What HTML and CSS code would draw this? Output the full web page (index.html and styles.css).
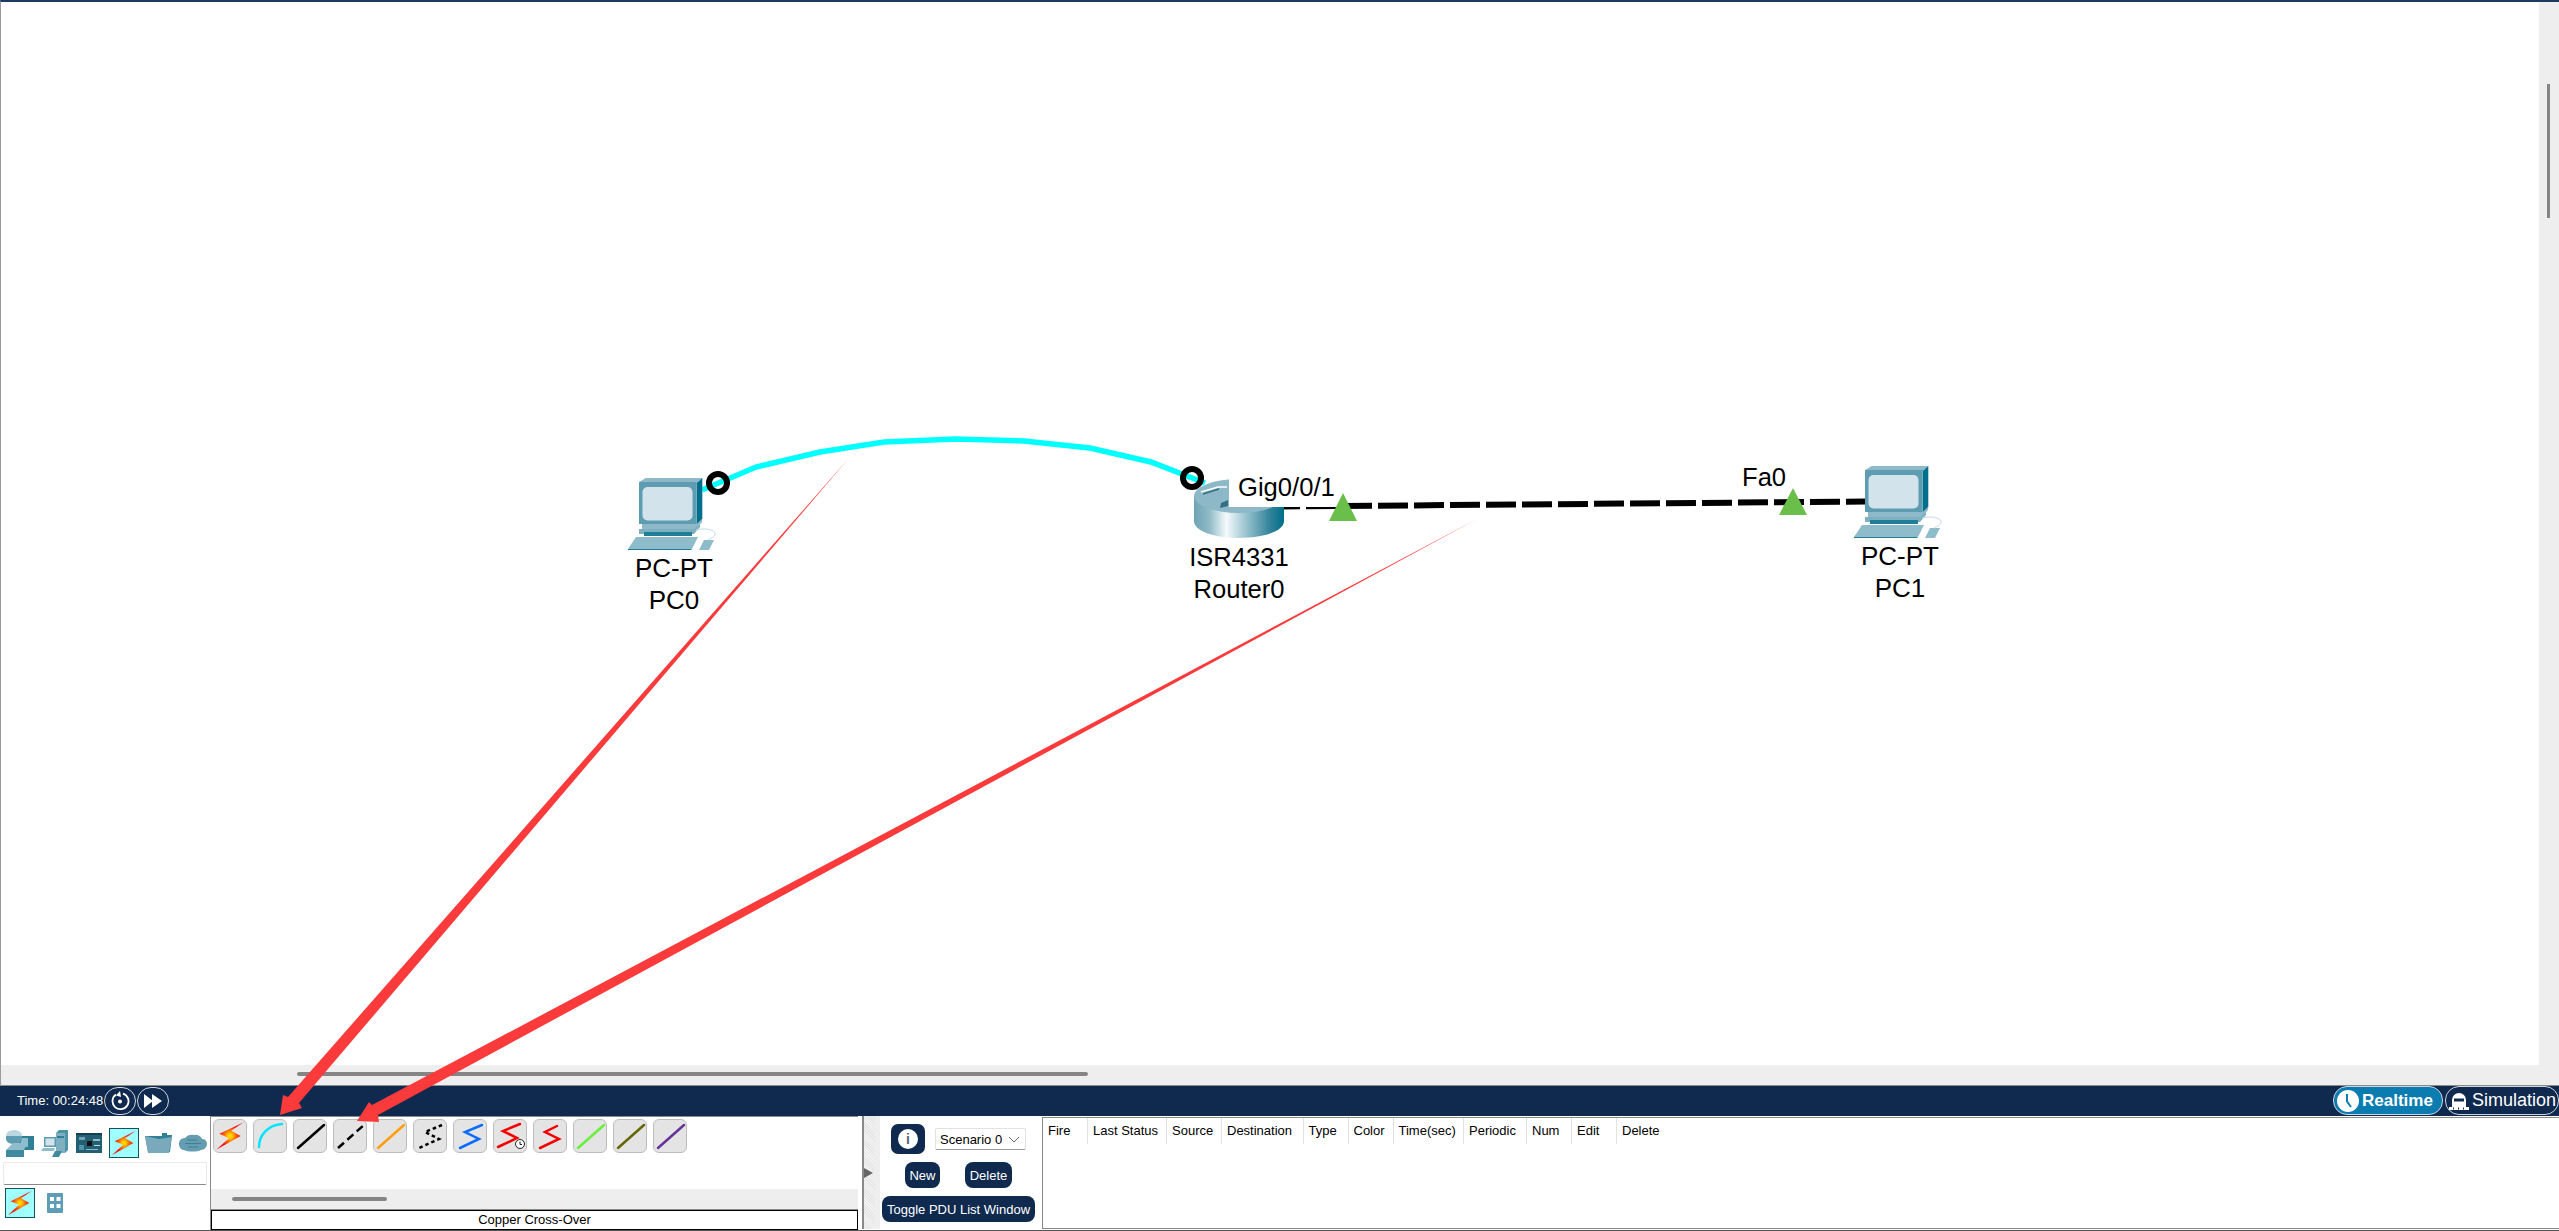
FILE: index.html
```html
<!DOCTYPE html>
<html lang="en">
<head>
<meta charset="utf-8">
<title>Packet Tracer</title>
<link rel="stylesheet" href="styles.css">
</head>
<body>
<svg class="defs" width="0" height="0" aria-hidden="true">
  <defs>
    <radialGradient id="bolt" cx="50%" cy="50%" r="50%">
      <stop offset="0" stop-color="#ffe600"/>
      <stop offset=".18" stop-color="#ffc400"/>
      <stop offset=".42" stop-color="#ff6a00"/>
      <stop offset=".75" stop-color="#f01010"/>
    </radialGradient>
    <linearGradient id="drum" x1="0" x2="1" y1="0" y2="0">
      <stop offset="0" stop-color="#6fa3b4"/>
      <stop offset=".17" stop-color="#8fbac7"/>
      <stop offset=".36" stop-color="#f4fafb"/>
      <stop offset=".55" stop-color="#a5cad5"/>
      <stop offset=".85" stop-color="#2f8198"/>
      <stop offset="1" stop-color="#006f8c"/>
    </linearGradient>
    <symbol id="pc" viewBox="0 0 88 72">
      <polygon points="11,4 17.7,0 74.3,0 68.7,5" fill="#8fb9c8"/>
      <polygon points="68.7,5 74.3,0 74.3,41 68.7,47" fill="#006f8c"/>
      <rect x="11" y="4" width="57.7" height="42" fill="#5e9db1"/>
      <rect x="14.5" y="9" width="50" height="33.5" rx="5" fill="#d3e3eb"/>
      <polygon points="14,46 68.7,46 74,41 74,44 68,51 14,51" fill="#8fb9c8"/>
      <polygon points="11,51 66,51 72,46 72,49 66,56 11,56" fill="#7fb0c0"/>
      <rect x="16" y="54" width="48" height="4" fill="#1f7f99"/>
      <polygon points="0,71 8,59 70,59 64,71" fill="#8fbccb"/>
      <polygon points="0,71 64,71 63,72 0,72" fill="#1f7f99"/>
      <polygon points="71,72 76,62 86,62 81,72" fill="#8fbccb"/>
      <path d="M68 52c8-2 17-1 19 3 1 3-3 5-7 7" fill="none" stroke="#c4dbe3" stroke-width="1"/>
    </symbol>
    <symbol id="lightning" viewBox="0 0 30 30">
      <polygon points="28,2 5,13 14,17 2,28 25,15 16,10" fill="url(#bolt)"/>
    </symbol>
  </defs>
</svg>

<main class="workspace">
  <section class="canvas">
    <svg class="wires" width="2538" height="1063">
      <g transform="translate(-1 -2)">
        <polyline class="wire-cross" points="702,490 756,467 820,452 884,442 955,439 1024,441 1090,448 1151,462 1205,483"/>
        <line class="wire-straight" x1="1283" y1="506.5" x2="1866" y2="501.5"/>
      </g>
    </svg>

    <div class="node node-pc0">
      <svg class="pc-icon" width="88" height="72"><use href="#pc"/></svg>
      <span class="node-text">PC-PT</span>
      <span class="node-text">PC0</span>
    </div>
    <div class="node node-router">
      <svg class="router-icon" width="90" height="60" viewBox="0 0 90 60">
        <path d="M0 17V42C0 52 20 59 45 59S90 52 90 42V17Z" fill="url(#drum)"/>
        <ellipse cx="45" cy="17" rx="45" ry="17" fill="#8db8c8"/>
        <path d="M7 13L24 8H33" fill="none" stroke="#fff" stroke-width="1.500"/>
        <path d="M9 15L25 10" fill="none" stroke="#346f83" stroke-width="1.500"/>
        <polygon points="27,24 34,21 34,27 26,29" fill="#346f83"/>
      </svg>
      <span class="node-text">ISR4331</span>
      <span class="node-text">Router0</span>
    </div>
    <div class="node node-pc1">
      <svg class="pc-icon" width="88" height="72"><use href="#pc"/></svg>
      <span class="node-text">PC-PT</span>
      <span class="node-text">PC1</span>
    </div>

    <span class="port port-gig">Gig0/0/1</span>
    <span class="port port-fa">Fa0</span>

    <svg class="wires" width="2538" height="1063">
      <g transform="translate(-1 -2)">
        <circle class="ring" cx="718" cy="483" r="9"/>
        <circle class="ring" cx="1192" cy="478" r="9"/>
        <polygon class="link-up" points="1329,521 1357,521 1343,493"/>
        <polygon class="link-up" points="1779,515 1807,515 1793,488"/>
      </g>
    </svg>
  </section>
  <div class="vtrack"><div class="vthumb"></div></div>
  <div class="htrack"><div class="hthumb"></div></div>
  <div class="corner"></div>
</main>

<header class="timebar">
  <span class="time">Time: 00:24:48</span>
  <button class="round-btn" type="button" aria-label="Reset">
    <svg width="20" height="20" viewBox="0 0 20 20"><path d="M6 3.600A8 8 0 1 0 13 2.600" fill="none" stroke="#fff" stroke-width="1.800"/><polygon points="10,0 6,4.500 11,6" fill="#fff"/><circle cx="10" cy="10.500" r="2" fill="#fff"/></svg>
  </button>
  <button class="round-btn" type="button" aria-label="Fast forward">
    <svg width="18" height="14" viewBox="0 0 18 14"><polygon points="0,0 9,7 0,14" fill="#fff"/><polygon points="8,0 18,7 8,14" fill="#fff"/></svg>
  </button>
  <span class="grow"></span>
  <button class="mode mode-real" type="button">
    <svg width="22" height="22" viewBox="0 0 22 22"><circle cx="11" cy="11" r="11" fill="#fff"/><path d="M10 4V11.500L14 17" fill="none" stroke="#0a7cb0" stroke-width="2"/></svg>
    Realtime
  </button>
  <button class="mode mode-sim" type="button">
    <svg width="20" height="18" viewBox="0 0 20 18"><path d="M3 15V8A7 7 0 0 1 17 8V15Z" fill="#fff"/><rect x="5" y="6.500" width="10" height="3" fill="#0f2a4e"/><rect x="0" y="15" width="20" height="3" fill="#fff"/><rect x="4" y="15.500" width="1" height="2" fill="#0f2a4e"/><rect x="9" y="15.500" width="1" height="2" fill="#0f2a4e"/><rect x="14" y="15.500" width="1" height="2" fill="#0f2a4e"/></svg>
    Simulation
  </button>
</header>

<footer class="dock">
  <section class="categories">
    <div class="cat-row">
      <svg width="28" height="27" viewBox="0 0 28 27">
        <rect x="13" y="6" width="15" height="14" fill="#2f7f97"/><rect x="15" y="8" width="7" height="9" fill="#8dbccb"/>
        <ellipse cx="8" cy="5.500" rx="8" ry="5.500" fill="#bcd7e0"/><path d="M0 6v3c0 3 4 5 8 5s8-2 8-5V6" fill="#5e9db1"/>
        <polygon points="0,20 7,13 21,13 18,20" fill="#8fbccb"/><rect x="0" y="20" width="18" height="7" fill="#3f8aa1"/>
      </svg>
      <svg width="28" height="27" viewBox="0 0 28 27">
        <polygon points="15,3 18,0 27,0 27,20 24,23 15,23" fill="#4d93a9"/><rect x="15" y="3" width="9" height="20" fill="#7fb0c0"/><rect x="16" y="6" width="7" height="2" fill="#2f7f97"/>
        <rect x="3" y="7" width="12" height="10" fill="#5e9db1"/><rect x="4.500" y="8.500" width="9" height="7" fill="#d3e3eb"/>
        <polygon points="0,21 2,18 14,18 13,21" fill="#8fbccb"/>
        <polygon points="11,27 14,21 21,21 18,27" fill="#3f8aa1"/>
      </svg>
      <svg width="26" height="20" viewBox="0 0 26 20">
        <rect width="26" height="20" fill="#245e73"/><rect x="0" y="0" width="26" height="2" fill="#14414f"/><rect x="11" y="8" width="5" height="5" fill="#111"/><rect x="3" y="4" width="6" height="3" fill="#6fa3b4"/><rect x="17" y="6" width="7" height="2" fill="#8fbccb"/><rect x="3" y="12" width="5" height="5" fill="#4d93a9"/><rect x="18" y="12" width="6" height="1" fill="#c4dbe3"/><rect x="10" y="16" width="12" height="1" fill="#8fbccb"/>
      </svg>
      <span class="tile"><svg width="30" height="30"><use href="#lightning"/></svg></span>
      <svg width="27" height="20" viewBox="0 0 27 20">
        <polygon points="0,3 17,3 17,0 22,0 22,2 27,2 25,19 3,19" fill="#2f7f97"/><polygon points="0,3 14,6 27,4 24,20 3,20" fill="#79a9ba"/>
      </svg>
      <svg width="28" height="18" viewBox="0 0 28 18">
        <path d="M5 16C1 16 0 12 0 9.500S2 4 6 4C8 1 12 0 15 1C18 0 22 2 23 5C26 5 28 7 28 10S25 16 22 16C18 18 9 18 5 16Z" fill="#659db0"/>
        <path d="M8 6H18M6 9.500H22M9 13H19" stroke="#3f7f95" stroke-width="1.200"/>
      </svg>
    </div>
    <div class="search-box"></div>
    <div class="sub-row">
      <span class="tile"><svg width="30" height="30"><use href="#lightning"/></svg></span>
      <svg width="16" height="20" viewBox="0 0 16 20"><rect width="16" height="20" rx="1" fill="#5d9db5"/><rect x="3" y="4" width="4" height="4" fill="#fff"/><rect x="9.500" y="4" width="4" height="4" fill="#fff"/><rect x="3" y="11" width="4" height="4" fill="#fff"/><rect x="9.500" y="11" width="4" height="4" fill="#fff"/></svg>
    </div>
  </section>

  <section class="parts">
    <div class="cable-row">
      <button class="cable" type="button" aria-label="Automatic"><svg width="32" height="32"><use href="#lightning"/></svg></button>
      <button class="cable" type="button" aria-label="Console"><svg width="32" height="32" viewBox="0 0 32 32"><path class="c-cyan" d="M5 27C5 15 14 5 28 4"/></svg></button>
      <button class="cable" type="button" aria-label="Copper Straight-Through"><svg width="32" height="32" viewBox="0 0 32 32"><path class="c-black" d="M4 28L30 5"/></svg></button>
      <button class="cable" type="button" aria-label="Copper Cross-Over"><svg width="32" height="32" viewBox="0 0 32 32"><path class="c-black c-dash" d="M4 28L30 5"/></svg></button>
      <button class="cable" type="button" aria-label="Fiber"><svg width="32" height="32" viewBox="0 0 32 32"><path class="c-orange" d="M4 28L30 5"/></svg></button>
      <button class="cable" type="button" aria-label="Phone"><svg width="32" height="32" viewBox="0 0 32 32"><path class="c-black c-dot" d="M28 5L11 12L25 19L5 28"/></svg></button>
      <button class="cable" type="button" aria-label="Coaxial"><svg width="32" height="32" viewBox="0 0 32 32"><path class="c-blue" d="M28 5L11 12L25 19L6 28"/></svg></button>
      <button class="cable" type="button" aria-label="Serial DCE"><svg width="32" height="32" viewBox="0 0 32 32"><path class="c-red" d="M26 4L9 11L23 18L4 27"/><circle class="c-clock" cx="26" cy="24" r="4.500"/><path class="c-hand" d="M26 21.500V24.500H28"/></svg></button>
      <button class="cable" type="button" aria-label="Serial DTE"><svg width="32" height="32" viewBox="0 0 32 32"><path class="c-red" d="M23 6L11 12L25 19L6 28"/></svg></button>
      <button class="cable" type="button" aria-label="Octal"><svg width="32" height="32" viewBox="0 0 32 32"><path class="c-green" d="M4 28L30 5"/></svg></button>
      <button class="cable" type="button" aria-label="IoT"><svg width="32" height="32" viewBox="0 0 32 32"><path class="c-olive" d="M4 28L30 5"/></svg></button>
      <button class="cable" type="button" aria-label="USB"><svg width="32" height="32" viewBox="0 0 32 32"><path class="c-purple" d="M4 28L30 5"/></svg></button>
    </div>
    <div class="parts-track"><div class="parts-thumb"></div></div>
    <div class="parts-label">Copper Cross-Over</div>
  </section>

  <div class="splitter"><span class="split-arrow"></span></div>

  <section class="scenario">
    <div class="scn-row scn-top">
      <button class="info-btn" type="button" aria-label="Info"><span class="info-dot">i</span></button>
      <div class="select">Scenario 0
        <svg width="12" height="7" viewBox="0 0 12 7"><path d="M1 1L6 6L11 1" fill="none" stroke="#666" stroke-width="1"/></svg>
      </div>
    </div>
    <div class="scn-row scn-mid">
      <button class="navy-btn btn-new" type="button">New</button>
      <button class="navy-btn btn-del" type="button">Delete</button>
    </div>
    <button class="navy-btn btn-toggle" type="button">Toggle PDU List Window</button>
  </section>

  <section class="pdu">
    <div class="pdu-head">
      <span>Fire</span><span>Last Status</span><span>Source</span><span>Destination</span><span>Type</span><span>Color</span><span>Time(sec)</span><span>Periodic</span><span>Num</span><span>Edit</span><span>Delete</span>
    </div>
  </section>
</footer>

<svg class="annot" width="2559" height="1231" aria-hidden="true">
  <polygon points="849,458 299,1103 302,1108 280,1115 283,1095 288,1097"/>
  <polygon points="1477,519 378,1115 379,1122 357,1121 369,1102 372,1105"/>
</svg>
</body>
</html>
```
FILE: styles.css
```css
* { box-sizing: border-box; }
html { margin: 0; height: 1231px; overflow: hidden; }
body {
  position: relative;
  margin: 0;
  width: 2559px;
  height: 1231px;
  overflow: hidden;
  background: #fff;
  color: #000;
  font-family: "Liberation Sans", Arial, sans-serif;
  font-size: 13px;
  display: flex;
  flex-direction: column;
}
button { font-family: inherit; border: 0; padding: 0; margin: 0; }
.defs { position: absolute; left: 0; top: 0; }

/* workspace */
.workspace {
  height: 1086px;
  flex: none;
  border-top: 2px solid #1d3a63;
  border-left: 1px solid #9a9a9a;
  display: grid;
  grid-template-columns: 2538px 20px;
  grid-template-rows: 1063px 21px;
  background: #fff;
}
.canvas { position: relative; overflow: hidden; background: #fff; }
.wires { position: absolute; left: 0; top: 0; }
.wire-cross { fill: none; stroke: #00ffff; stroke-width: 5.500; }
.wire-straight { stroke: #000; stroke-width: 6; stroke-dasharray: 30 6; stroke-dashoffset: 13; }
.ring { fill: none; stroke: #000; stroke-width: 6; }
.link-up { fill: #6abf4b; }

.node {
  position: absolute;
  width: 140px;
  display: flex;
  flex-direction: column;
  align-items: center;
}
.node-pc0 { left: 603px; top: 476px; }
.node-router { left: 1168px; top: 477px; }
.node-pc1 { left: 1829px; top: 464px; }
.pc-icon { margin-right: 4px; margin-bottom: 2px; display: block; }
.router-icon { display: block; margin-bottom: 2px; }
.node-text { font-size: 26px; line-height: 32px; white-space: nowrap; }
.node-router .node-text { font-size: 25.600px; }
.port { position: absolute; font-size: 25.600px; line-height: 32px; white-space: nowrap; }
.port-gig { left: 1228px; top: 469px; width: 116px; height: 36px; padding: 0 0 0 9px; background: #fff; }
.port-fa { left: 1741px; top: 459px; }

.vtrack { background: #eee; padding: 82px 0 0 8px; }
.vthumb { width: 3px; height: 134px; background: #858585; }
.htrack { background: #eee; padding: 7px 0 0 296px; border-bottom: 1px solid #8a8a8a; }
.hthumb { width: 791px; height: 4px; border-radius: 2px; background: #858585; }
.corner { background: #eee; border-bottom: 1px solid #8a8a8a; }

/* time bar */
.timebar {
  height: 30px;
  flex: none;
  background: #0f2a4e;
  display: flex;
  align-items: center;
  padding: 0 0 1px 17px;
  color: #fff;
}
.time { width: 87px; font-size: 13px; white-space: nowrap; }
.round-btn {
  width: 32px;
  height: 28px;
  margin-right: 1px;
  border: 1px solid #cfd6df;
  border-radius: 14px;
  background: transparent;
  display: flex;
  align-items: center;
  justify-content: center;
}
.grow { flex: 1; }
.mode {
  height: 29px;
  display: flex;
  align-items: center;
  border: 1px solid #cfd6df;
  border-radius: 14px;
  color: #fff;
  font-size: 18px;
  white-space: nowrap;
}
.mode-real { width: 110px; padding-left: 3px; gap: 3px; background: #0a7cb0; font-weight: bold; font-size: 17px; margin-right: 2px; }
.mode-sim { width: 114px; padding-left: 3px; gap: 3px; background: #0f2a4e; }

/* dock */
.dock {
  height: 115px;
  flex: none;
  display: flex;
  background: #fff;
  border-bottom: 1px solid #555;
}
.categories { width: 210px; flex: none; padding: 12px 3px 0; }
.cat-row {
  display: grid;
  grid-template-columns: repeat(6, 34.500px);
  justify-items: center;
  align-items: center;
  height: 30px;
}
.tile {
  width: 30px;
  height: 30px;
  display: flex;
  align-items: center;
  justify-content: center;
  background: #9fffff;
  border: 1px solid #14505f;
}
.search-box {
  width: 204px;
  height: 23px;
  margin-top: 4px;
  border: 1px solid #e9e9e9;
  border-bottom: 1px solid #8a8a8a;
  border-radius: 2px;
}
.sub-row { display: flex; align-items: center; gap: 12px; margin-top: 3px; padding-left: 2px; }

.parts {
  width: 648px;
  flex: none;
  display: flex;
  flex-direction: column;
  border-left: 1px solid #8a8a8a;
  border-top: 1px solid #8a8a8a;
}
.cable-row { display: flex; gap: 6px; padding: 2px 0 0 2px; height: 72px; }
.cable {
  width: 34px;
  height: 34px;
  flex: none;
  background: #e4e4e4;
  border: 1px solid #bdbdbd;
  border-radius: 6px;
  display: flex;
  align-items: center;
  justify-content: center;
}
.cable svg path { fill: none; stroke-width: 2.500; stroke-linecap: round; stroke-linejoin: miter; }
.c-black { stroke: #000; }
.cable svg .c-dash { stroke-dasharray: 8 4.500; stroke-linecap: butt; }
.cable svg .c-dot { stroke-dasharray: 3.500 3; stroke-linecap: butt; }
.c-cyan { stroke: #00e5ff; }
.c-orange { stroke: #ff9d0a; }
.c-blue { stroke: #0a6cff; }
.c-red { stroke: #f40000; }
.c-green { stroke: #66f03c; }
.c-olive { stroke: #666600; }
.c-purple { stroke: #663399; }
.c-clock { fill: #fff; stroke: #222; stroke-width: 1; }
.cable svg .c-hand { stroke: #222; stroke-width: 1; stroke-linecap: butt; }
.parts-track {
  height: 21px;
  flex: none;
  background: #eee;
  padding: 8px 0 0 21px;
  border-bottom: 1px solid #8a8a8a;
}
.parts-thumb { width: 155px; height: 4px; border-radius: 2px; background: #858585; }
.parts-label {
  height: 20px;
  flex: none;
  border: 1px solid #000;
  text-align: center;
  font-size: 13px;
  line-height: 18px;
}

.splitter {
  width: 18px;
  margin-left: 4px;
  flex: none;
  border-left: 2px solid #8a8a8a;
  border-right: 5px solid #eee;
  background-color: #f2f2f2;
  background-image: repeating-linear-gradient(45deg, #e6e6e6 0 1px, transparent 1px 2px);
  display: flex;
  align-items: center;
  margin-bottom: 1px;
}
.split-arrow {
  width: 0;
  height: 0;
  border-left: 9px solid #666;
  border-top: 5px solid transparent;
  border-bottom: 5px solid transparent;
}

.scenario {
  width: 162px;
  flex: none;
  display: flex;
  flex-direction: column;
  align-items: flex-start;
}
.scn-row { display: flex; align-items: center; }
.scn-top { width: 100%; gap: 10px; padding: 8px 0 0 11px; height: 38px; }
.info-btn {
  width: 34px;
  height: 30px;
  border-radius: 7px;
  background: #0f2a4e;
  display: flex;
  align-items: center;
  justify-content: center;
}
.info-dot {
  width: 20px;
  height: 20px;
  border-radius: 50%;
  background: #fff;
  color: #5a6675;
  font-weight: bold;
  font-size: 14px;
  line-height: 20px;
  text-align: center;
}
.select {
  width: 91px;
  height: 22px;
  display: flex;
  align-items: center;
  justify-content: space-between;
  padding: 0 5px 0 4px;
  border: 1px solid #e2e2e2;
  border-bottom: 1px solid #9a9a9a;
  border-radius: 2px;
  font-size: 13px;
}
.scn-mid { width: 100%; margin-top: 8px; padding-left: 25px; gap: 25px; }
.navy-btn {
  background: #0f2a4e;
  color: #fff;
  font-size: 13px;
  border-radius: 8px;
  white-space: nowrap;
}
.btn-new { width: 35px; height: 26px; }
.btn-del { width: 47px; height: 26px; }
.btn-toggle { width: 153px; height: 26px; margin: 8px 0 0 2px; }

.pdu {
  flex: 1;
  margin-top: 1px;
  margin-bottom: 1px;
  border-top: 1px solid #8a8a8a;
  border-left: 1px solid #8a8a8a;
  border-bottom: 1px solid #8a8a8a;
}
.pdu-head {
  display: grid;
  grid-template-columns: 45px 79px 55px 81.500px 45px 45px 70.500px 63px 45px 45px 1fr;
  height: 26px;
  font-size: 13px;
  line-height: 26px;
}
.pdu-head span { padding-left: 5px; border-right: 1px solid #e2e2e2; white-space: nowrap; }
.pdu-head span:last-child { border-right: 0; }

.annot { position: absolute; left: 0; top: 0; pointer-events: none; }
.annot polygon { fill: #fb3b3b; }
```
